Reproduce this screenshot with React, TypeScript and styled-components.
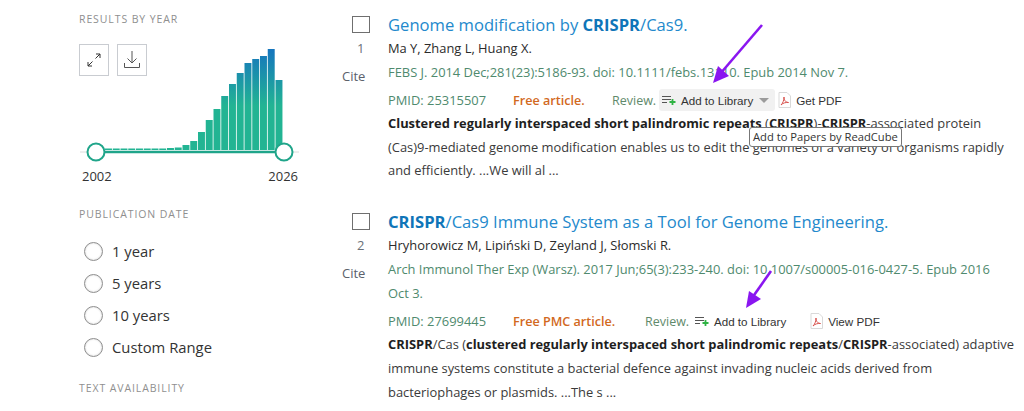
import styled, { createGlobalStyle } from 'styled-components';

const barHeights = [1.5, 1.5, 1.5, 1.5, 1.5, 1.5, 1.5, 1.5, 2, 2.5, 5, 9, 18, 30, 41, 54, 66, 77, 87, 91, 94, 101, 70];
const BAR_WIDTH = 7.75;

const GlobalStyle = createGlobalStyle`
  html, body { margin: 0; background: #fff; }
  body { font-family: "Open Sans", "Noto Sans", sans-serif; color: #212121; overflow: hidden; }
`;

const Page = styled.div`
  position: relative;
  width: 1024px;
  height: 411px;
  overflow: hidden;
  display: flex;
  padding-left: 79px;
  box-sizing: border-box;
`;

const Sidebar = styled.aside`
  width: 263px;
  flex: none;
  padding-top: 12px;
`;

const SideHeading = styled.h3<{ $mt?: number }>`
  margin: ${(p) => p.$mt ?? 0}px 0 0;
  font-size: 10.5px;
  line-height: 14px;
  font-weight: 400;
  letter-spacing: 0.9px;
  color: #8f8f8f;
  text-transform: uppercase;
`;

const ChartArea = styled.div`
  position: relative;
  width: 220px;
  height: 125px;
  margin-top: 18px;
`;

const IconButtons = styled.div`
  position: absolute;
  left: 0;
  top: 0;
  display: flex;
  gap: 8px;
`;

const IconButton = styled.div`
  width: 30px;
  height: 32px;
  box-sizing: border-box;
  border: 1px solid #c9ccd1;
  display: flex;
  align-items: center;
  justify-content: center;
`;

const ChartSvg = styled.svg`
  display: block;
`;

const YearRow = styled.div`
  display: flex;
  justify-content: space-between;
  width: 216px;
  padding-left: 3px;
  font-size: 13px;
  line-height: 16px;
  color: #333;
  margin-top: -1px;
`;

const RadioList = styled.ul`
  list-style: none;
  margin: 14px 0 0 5px;
  padding: 0;
`;

const RadioRow = styled.li`
  display: flex;
  align-items: center;
  gap: 9px;
  height: 32px;
  font-size: 14.8px;
  color: #333;
`;

const RadioDot = styled.span`
  width: 19px;
  height: 19px;
  box-sizing: border-box;
  border: 1px solid #8e8e8e;
  border-radius: 50%;
  box-shadow: inset 0 0 2px #ccc;
`;

const Results = styled.main`
  flex: 1;
  min-width: 0;
`;

const Article = styled.article<{ $mt: number }>`
  display: flex;
  margin-top: ${(p) => p.$mt}px;
`;

const Gutter = styled.div`
  width: 46px;
  flex: none;
  padding-top: 3px;
  display: flex;
  flex-direction: column;
  align-items: flex-start;
  font-size: 13px;
  color: #6b717a;
`;

const Check = styled.span`
  width: 18px;
  height: 17px;
  margin-left: 10px;
  box-sizing: border-box;
  border: 1px solid #6f6f6f;
`;

const Number = styled.span`
  margin: 7px 0 0 15px;
  line-height: 16px;
`;

const Cite = styled.span`
  margin-top: 11px;
  line-height: 18px;
  color: #5b616b;
`;

const Body = styled.div`
  flex: 1;
  min-width: 0;
`;

const Title = styled.a`
  display: block;
  font-size: 16.6px;
  line-height: 24px;
  color: #2389cc;
  white-space: nowrap;
  b { font-weight: 700; color: #0f75b8; }
`;

const Line = styled.div`
  font-size: 12.9px;
  line-height: 23px;
  white-space: nowrap;
  color: #2b2b2b;
`;

const Journal = styled(Line)`
  line-height: 24px;
  color: #4f8a6e;
`;

const MetaRow = styled.div`
  display: flex;
  align-items: center;
  height: 24px;
  margin-top: 4px;
  font-size: 12.9px;
  color: #4f8a6e;
  white-space: nowrap;
`;

const FreeTag = styled.span<{ $w: number }>`
  width: ${(p) => p.$w}px;
  font-size: 12.6px;
  font-weight: 600;
  color: #d2691e;
`;

const Pmid = styled.span`
  width: 125px;
`;

const Review = styled.span`
  color: #5f8a6b;
  width: 47px;
  font-size: 12.5px;
`;

const LibraryButton = styled.span<{ $open?: boolean }>`
  display: inline-flex;
  align-items: center;
  gap: 4px;
  height: 22px;
  padding: 0 3px;
  margin-right: ${(p) => (p.$open ? 3 : 21)}px;
  border-radius: 3px;
  background: ${(p) => (p.$open ? '#f1f1f1' : 'transparent')};
  font-family: "Liberation Sans", Arial, sans-serif;
  font-size: 11.6px;
  color: #333;
`;

const Caret = styled.span`
  width: 0;
  height: 0;
  margin-left: 2px;
  margin-right: 3px;
  border-left: 5px solid transparent;
  border-right: 5px solid transparent;
  border-top: 5px solid #9b9b9b;
`;

const PdfLink = styled.span`
  display: inline-flex;
  align-items: center;
  gap: 5px;
  font-family: "Liberation Sans", Arial, sans-serif;
  font-size: 11.7px;
  color: #333;
`;

const Snippet = styled.p`
  margin: 0;
  font-size: 12.9px;
  line-height: 23.7px;
  white-space: nowrap;
  color: #3a3a3a;
  b { font-weight: 700; color: #1e1e1e; }
`;

const Tooltip = styled.div`
  position: absolute;
  left: 749px;
  top: 127px;
  height: 18px;
  padding: 0 3px;
  border: 1px solid #777;
  border-radius: 3px;
  background: #fff;
  font-size: 11.2px;
  line-height: 18px;
  color: #333;
  white-space: nowrap;
`;

const Arrow = styled.svg<{ $x: number; $y: number }>`
  position: absolute;
  left: ${(p) => p.$x}px;
  top: ${(p) => p.$y}px;
`;

function Chart() {
  const base = 106;
  return (
    <ChartSvg width="220" height="125" viewBox="0 0 220 125">
      <defs>
        <linearGradient id="barFill" gradientUnits="userSpaceOnUse" x1="0" y1="6" x2="0" y2="62">
          <stop offset="0" stopColor="#1676bd" />
          <stop offset="1" stopColor="#22b493" />
        </linearGradient>
      </defs>
      {barHeights.map((h, i) => (
        <rect
          key={i}
          x={26 + i * BAR_WIDTH}
          y={base - h}
          width={BAR_WIDTH - 0.8}
          height={h}
          fill="url(#barFill)"
        />
      ))}
      <line x1="1" x2="220" y1="108" y2="108" stroke="#dcdcdc" strokeWidth="1" />
      <line x1="17" x2="205" y1="108" y2="108" stroke="#20a58a" strokeWidth="2.4" />
      <circle cx="17" cy="108" r="8.500" fill="#fff" stroke="#20a58a" strokeWidth="2" />
      <circle cx="205" cy="108" r="8.500" fill="#fff" stroke="#20a58a" strokeWidth="2" />
    </ChartSvg>
  );
}

function AddIcon() {
  return (
    <svg width="15" height="12" viewBox="0 0 15 12">
      <path d="M0 2.500h9M0 5.500h9M0 8.500h5" stroke="#555" strokeWidth="1.2" fill="none" />
      <path d="M10.500 5v6M7.500 8h6" stroke="#2fb344" strokeWidth="1.8" fill="none" />
    </svg>
  );
}

function PdfIcon() {
  return (
    <svg width="13" height="16" viewBox="0 0 13 16">
      <path d="M1 .5h8l3.500 3.500v11.500H1z" fill="#fff" stroke="#d9d9d9" />
      <path d="M3 13c2-2 3-5 3-8 0 3 1 5 4.500 5.500-3-.3-5.500.5-7.500 2.500z" fill="none" stroke="#d9534f" strokeWidth="1" />
    </svg>
  );
}

function AddToLibrary({ open }: { open?: boolean }) {
  return (
    <LibraryButton $open={open}>
      <AddIcon />
      Add to Library
      {open && <Caret />}
    </LibraryButton>
  );
}

export default function App() {
  return (
    <Page>
      <GlobalStyle />
      <Sidebar>
        <SideHeading>Results by year</SideHeading>
        <ChartArea>
          <Chart />
          <IconButtons>
            <IconButton>
              <svg width="14" height="14" viewBox="0 0 14 14" fill="none" stroke="#333" strokeWidth="1">
                <path d="M8.500 5.500 13 1M9 1h4v4M5.500 8.500 1 13M1 9v4h4" />
              </svg>
            </IconButton>
            <IconButton>
              <svg width="16" height="18" viewBox="0 0 16 18" fill="none" stroke="#555" strokeWidth="1">
                <path d="M8 0v12M3.500 7.500 8 12l4.500-4.500M.5 12v4.500h15V12" />
              </svg>
            </IconButton>
          </IconButtons>
        </ChartArea>
        <YearRow>
          <span>2002</span>
          <span>2026</span>
        </YearRow>
        <SideHeading $mt={23}>Publication date</SideHeading>
        <RadioList>
          {['1 year', '5 years', '10 years', 'Custom Range'].map((label) => (
            <RadioRow key={label}>
              <RadioDot />
              {label}
            </RadioRow>
          ))}
        </RadioList>
        <SideHeading $mt={18}>Text availability</SideHeading>
      </Sidebar>
      <Results>
        <Article $mt={13}>
          <Gutter>
            <Check />
            <Number>1</Number>
            <Cite>Cite</Cite>
          </Gutter>
          <Body>
            <Title>
              Genome modification by <b>CRISPR</b>/Cas9.
            </Title>
            <Line>Ma Y, Zhang L, Huang X.</Line>
            <Journal>FEBS J. 2014 Dec;281(23):5186-93. doi: 10.1111/febs.13110. Epub 2014 Nov 7.</Journal>
            <MetaRow>
              <Pmid>PMID: 25315507</Pmid>
              <FreeTag $w={99}>Free article.</FreeTag>
              <Review>Review.</Review>
              <AddToLibrary open />
              <PdfLink>
                <PdfIcon />
                Get PDF
              </PdfLink>
            </MetaRow>
            <Snippet>
              <b>Clustered regularly interspaced short palindromic repeats</b> (<b>CRISPR</b>)-<b>CRISPR</b>-associated protein
              <br />
              (Cas)9-mediated genome modification enables us to edit the genomes of a variety of organisms rapidly
              <br />
              and efficiently. ...We will al ...
            </Snippet>
          </Body>
        </Article>
        <Article $mt={27}>
          <Gutter>
            <Check />
            <Number>2</Number>
            <Cite>Cite</Cite>
          </Gutter>
          <Body>
            <Title>
              <b>CRISPR</b>/Cas9 Immune System as a Tool for Genome Engineering.
            </Title>
            <Line>Hryhorowicz M, Lipiński D, Zeyland J, Słomski R.</Line>
            <Journal>
              Arch Immunol Ther Exp (Warsz). 2017 Jun;65(3):233-240. doi: 10.1007/s00005-016-0427-5. Epub 2016
              <br />
              Oct 3.
            </Journal>
            <MetaRow>
              <Pmid>PMID: 27699445</Pmid>
              <FreeTag $w={132}>Free PMC article.</FreeTag>
              <Review>Review.</Review>
              <AddToLibrary />
              <PdfLink>
                <PdfIcon />
                View PDF
              </PdfLink>
            </MetaRow>
            <Snippet>
              <b>CRISPR</b>/Cas (<b>clustered regularly interspaced short palindromic repeats</b>/<b>CRISPR</b>-associated) adaptive
              <br />
              immune systems constitute a bacterial defence against invading nucleic acids derived from
              <br />
              bacteriophages or plasmids. ...The s ...
            </Snippet>
          </Body>
        </Article>
      </Results>
      <Tooltip>Add to Papers by ReadCube</Tooltip>
      <Arrow $x={710} $y={22} width="56" height="64" viewBox="0 0 56 64">
        <path d="M52 3 10 52" stroke="#8a16f0" strokeWidth="2.6" fill="none" />
        <path d="M3 61 8 44 19 54z" fill="#8a16f0" />
      </Arrow>
      <Arrow $x={743} $y={268} width="32" height="44" viewBox="0 0 32 44">
        <path d="M28 3 9 30" stroke="#8a16f0" strokeWidth="2.6" fill="none" />
        <path d="M3 40 6 23 18 31z" fill="#8a16f0" />
      </Arrow>
    </Page>
  );
}
